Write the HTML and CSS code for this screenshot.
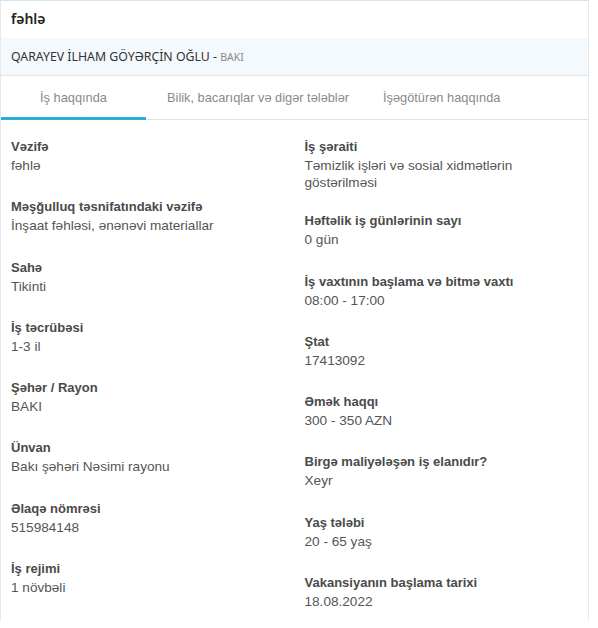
FILE: index.html
```html
<!doctype html>
<html lang="az">
<head>
  <meta charset="utf-8">
  <meta name="viewport" content="width=device-width, initial-scale=1.0">
  <title>Vakansiya</title>
  <link rel="stylesheet" href="styles.css">
</head>
<body>

<div class="card">
  <div class="card-title">fəhlə</div>
  <div class="employer">QARAYEV İLHAM GÖYƏRÇİN OĞLU - <span class="city">BAKI</span></div>

  <div class="tabs">
    <div class="tab active">İş haqqında</div>
    <div class="tab tab-skills">Bilik, bacarıqlar və digər tələblər</div>
    <div class="tab">İşəgötürən haqqında</div>
  </div>

  <div class="details">
    <div class="col">
      <div class="item"><div class="label">Vəzifə</div><div class="value">fəhlə</div></div>
      <div class="item"><div class="label">Məşğulluq təsnifatındaki vəzifə</div><div class="value">İnşaat fəhləsi, ənənəvi materiallar</div></div>
      <div class="item"><div class="label">Sahə</div><div class="value">Tikinti</div></div>
      <div class="item"><div class="label">İş təcrübəsi</div><div class="value">1-3 il</div></div>
      <div class="item"><div class="label">Şəhər / Rayon</div><div class="value">BAKI</div></div>
      <div class="item"><div class="label">Ünvan</div><div class="value">Bakı şəhəri Nəsimi rayonu</div></div>
      <div class="item"><div class="label">Əlaqə nömrəsi</div><div class="value">515984148</div></div>
      <div class="item"><div class="label">İş rejimi</div><div class="value">1 növbəli</div></div>
    </div>
    <div class="col">
      <div class="item item-long"><div class="label">İş şəraiti</div><div class="value">Təmizlik işləri və sosial xidmətlərin göstərilməsi</div></div>
      <div class="item"><div class="label">Həftəlik iş günlərinin sayı</div><div class="value">0 gün</div></div>
      <div class="item"><div class="label">İş vaxtının başlama və bitmə vaxtı</div><div class="value">08:00 - 17:00</div></div>
      <div class="item"><div class="label">Ştat</div><div class="value">17413092</div></div>
      <div class="item"><div class="label">Əmək haqqı</div><div class="value">300 - 350 AZN</div></div>
      <div class="item"><div class="label">Birgə maliyələşən iş elanıdır?</div><div class="value">Xeyr</div></div>
      <div class="item"><div class="label">Yaş tələbi</div><div class="value">20 - 65 yaş</div></div>
      <div class="item"><div class="label">Vakansiyanın başlama tarixi</div><div class="value">18.08.2022</div></div>
    </div>
  </div>
</div>

</body>
</html>
```

FILE: styles.css
```css
body {
  margin: 0;
  padding: 0;
  background: #fff;
  font-family: "Liberation Sans", Arial, sans-serif;
  color: #333;
}

.card {
  width: 587px;
  height: 620px;
  border-top: 1px solid #d3e6ee;
  border-left: 1px solid #e8e8e8;
  border-right: 1px solid #e8e8e8;
  overflow: hidden;
}

.card-title {
  font-family: "Noto Sans", "Open Sans", sans-serif;
  font-size: 14px;
  font-weight: 600;
  color: #222;
  padding: 8px 10px 0;
  height: 29px;
  line-height: 20px;
}

.employer {
  background: #f3f9fd;
  font-family: "Noto Sans", "Open Sans", sans-serif;
  font-size: 12.3px;
  color: #333;
  height: 37px;
  line-height: 38px;
  padding: 0 10px;
  border-bottom: 1px solid #e6e6e6;
}

.employer .city {
  font-size: 10.5px;
  color: #888;
}

.tabs {
  display: flex;
  height: 43px;
  border-bottom: 1px solid #e2e2e2;
}

.tab {
  font-size: 12.8px;
  color: #8a8a8a;
  line-height: 43px;
  white-space: nowrap;
  padding: 0 21px;
}

.tab.active {
  width: 145px;
  padding: 0;
  text-align: center;
  border-bottom: 3px solid #27b1d9;
  height: 41px;
  margin-bottom: -1px;
}

.tab-skills {
  width: 174px;
  flex: none;
}

.details {
  display: grid;
  grid-template-columns: 1fr 1fr;
  padding-top: 17px;
}

.col {
  padding-left: 10px;
}

.item {
  margin-bottom: 23.3px;
}

.item-long {
  margin-bottom: 20.3px;
}

.label {
  font-size: 13px;
  font-weight: bold;
  color: #4a4a4a;
  line-height: 19px;
}

.value {
  font-size: 13.6px;
  color: #555;
  line-height: 17px;
  margin-top: 1px;
}
```
